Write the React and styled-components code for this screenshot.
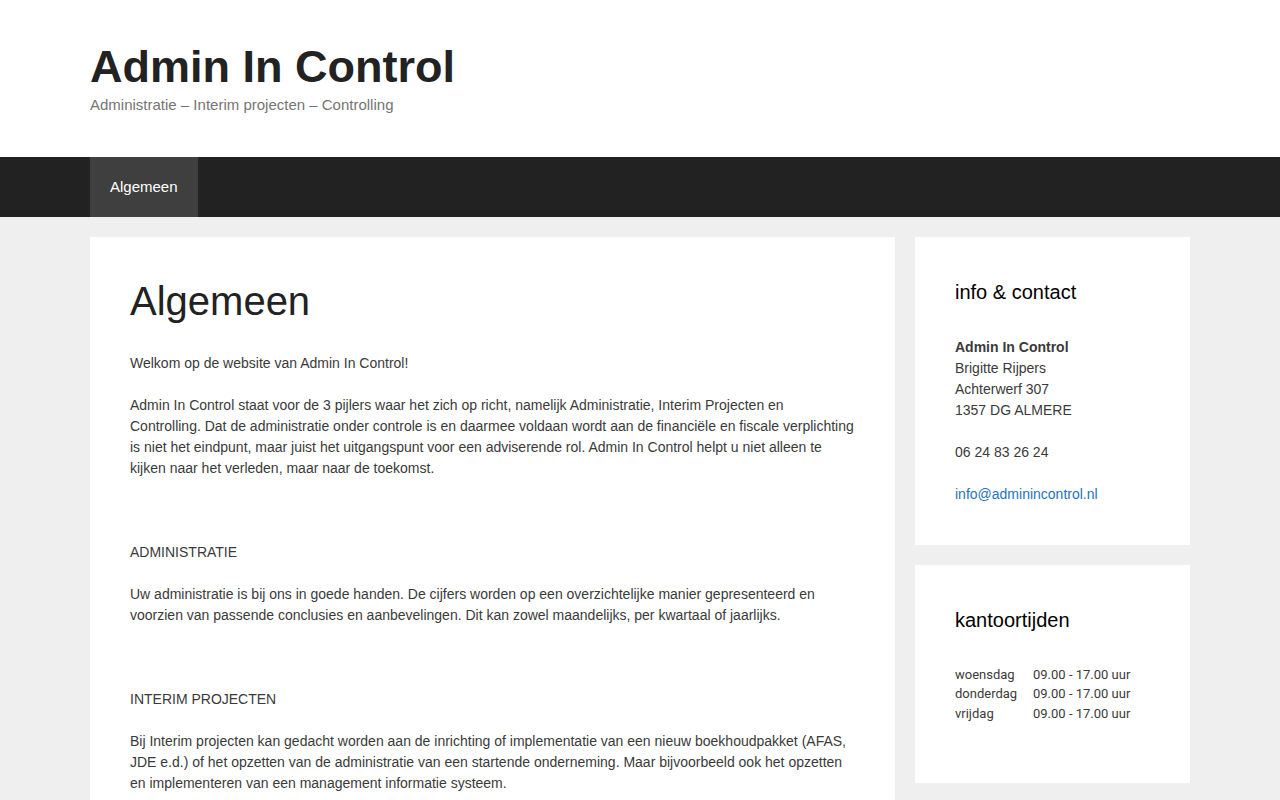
import React from "react";
import styled, { createGlobalStyle } from "styled-components";

const GlobalStyle = createGlobalStyle`
  html, body {
    margin: 0;
    padding: 0;
  }
  body {
    background: #efefef;
    color: #3a3a3a;
    font-family: "Liberation Sans", Arial, sans-serif;
    font-size: 14px;
    line-height: 1.5;
  }
  * {
    box-sizing: border-box;
  }
`;

const Header = styled.header`
  background: #fff;
`;

const InsideHeader = styled.div`
  width: 1100px;
  margin: 0 auto;
  padding: 40px 0;
`;

const SiteTitle = styled.h1`
  margin: 0;
  font-size: 45px;
  font-weight: bold;
  line-height: 1.2;
  color: #222;
`;

const Tagline = styled.p`
  margin: 0;
  font-size: 15px;
  line-height: 1.5;
  color: #757575;
`;

const Nav = styled.nav`
  background: #222;
`;

const NavInner = styled.ul`
  width: 1100px;
  margin: 0 auto;
  padding: 0;
  list-style: none;
  display: flex;
`;

const NavItem = styled.li`
  a {
    display: block;
    padding: 0 20px;
    line-height: 60px;
    font-size: 15px;
    color: #fff;
    text-decoration: none;
    background: ${props => (props.current ? "#3f3f3f" : "transparent")};
  }
`;

const Container = styled.div`
  width: 1100px;
  margin: 20px auto 0;
  display: flex;
  align-items: flex-start;
  gap: 20px;
`;

const Main = styled.main`
  width: 805px;
  background: #fff;
  padding: 40px;
`;

const PageTitle = styled.h1`
  margin: 0 0 28px;
  font-size: 40px;
  font-weight: 300;
  line-height: 1.2;
  color: #222;
`;

const Paragraph = styled.p`
  margin: 0 0 21px;
  min-height: 21px;
`;

const Sidebar = styled.aside`
  width: 275px;
  display: flex;
  flex-direction: column;
  gap: 20px;
`;

const Widget = styled.section`
  background: #fff;
  padding: 40px;
`;

const WidgetTitle = styled.h2`
  margin: 0 0 30px;
  font-size: 20px;
  font-weight: normal;
  line-height: 1.5;
  color: #000;
`;

const WidgetText = styled.p`
  margin: 0 0 21px;
  &:last-child {
    margin-bottom: 0;
  }
  a {
    color: #1e73be;
    text-decoration: none;
  }
`;

const Hours = styled.table`
  border-collapse: collapse;
  font-family: Roboto, "Liberation Sans", sans-serif;
  font-size: 13px;
  line-height: 19.5px;
  margin-bottom: 20px;
  td {
    padding: 0;
    vertical-align: top;
  }
  td:first-child {
    width: 78px;
  }
`;

const hours = [
  ["woensdag", "09.00 - 17.00 uur"],
  ["donderdag", "09.00 - 17.00 uur"],
  ["vrijdag", "09.00 - 17.00 uur"]
];

export default function App() {
  return (
    <>
      <GlobalStyle />
      <Header>
        <InsideHeader>
          <SiteTitle>Admin In Control</SiteTitle>
          <Tagline>Administratie – Interim projecten – Controlling</Tagline>
        </InsideHeader>
      </Header>
      <Nav>
        <NavInner>
          <NavItem current>
            <a href="#">Algemeen</a>
          </NavItem>
        </NavInner>
      </Nav>
      <Container>
        <Main>
          <PageTitle>Algemeen</PageTitle>
          <Paragraph>Welkom op de website van Admin In Control!</Paragraph>
          <Paragraph>
            Admin In Control staat voor de 3 pijlers waar het zich op richt,
            namelijk Administratie, Interim Projecten en Controlling. Dat de
            administratie onder controle is en daarmee voldaan wordt aan de
            financiële en fiscale verplichting is niet het eindpunt, maar juist
            het uitgangspunt voor een adviserende rol. Admin In Control helpt u
            niet alleen te kijken naar het verleden, maar naar de toekomst.
          </Paragraph>
          <Paragraph>&nbsp;</Paragraph>
          <Paragraph>ADMINISTRATIE</Paragraph>
          <Paragraph>
            Uw administratie is bij ons in goede handen. De cijfers worden op
            een overzichtelijke manier gepresenteerd en voorzien van passende
            conclusies en aanbevelingen. Dit kan zowel maandelijks, per
            kwartaal of jaarlijks.
          </Paragraph>
          <Paragraph>&nbsp;</Paragraph>
          <Paragraph>INTERIM PROJECTEN</Paragraph>
          <Paragraph>
            Bij Interim projecten kan gedacht worden aan de inrichting of
            implementatie van een nieuw boekhoudpakket (AFAS, JDE e.d.) of het
            opzetten van de administratie van een startende onderneming. Maar
            bijvoorbeeld ook het opzetten en implementeren van een management
            informatie systeem.
          </Paragraph>
          <Paragraph>&nbsp;</Paragraph>
          <Paragraph>CONTROLLING</Paragraph>
        </Main>
        <Sidebar>
          <Widget>
            <WidgetTitle>info &amp; contact</WidgetTitle>
            <WidgetText>
              <strong>Admin In Control</strong>
              <br />
              Brigitte Rijpers
              <br />
              Achterwerf 307
              <br />
              1357 DG ALMERE
            </WidgetText>
            <WidgetText>06 24 83 26 24</WidgetText>
            <WidgetText>
              <a href="#">info@adminincontrol.nl</a>
            </WidgetText>
          </Widget>
          <Widget>
            <WidgetTitle>kantoortijden</WidgetTitle>
            <Hours>
              <tbody>
                {hours.map(([day, time]) => (
                  <tr key={day}>
                    <td>{day}</td>
                    <td>{time}</td>
                  </tr>
                ))}
              </tbody>
            </Hours>
          </Widget>
        </Sidebar>
      </Container>
    </>
  );
}
